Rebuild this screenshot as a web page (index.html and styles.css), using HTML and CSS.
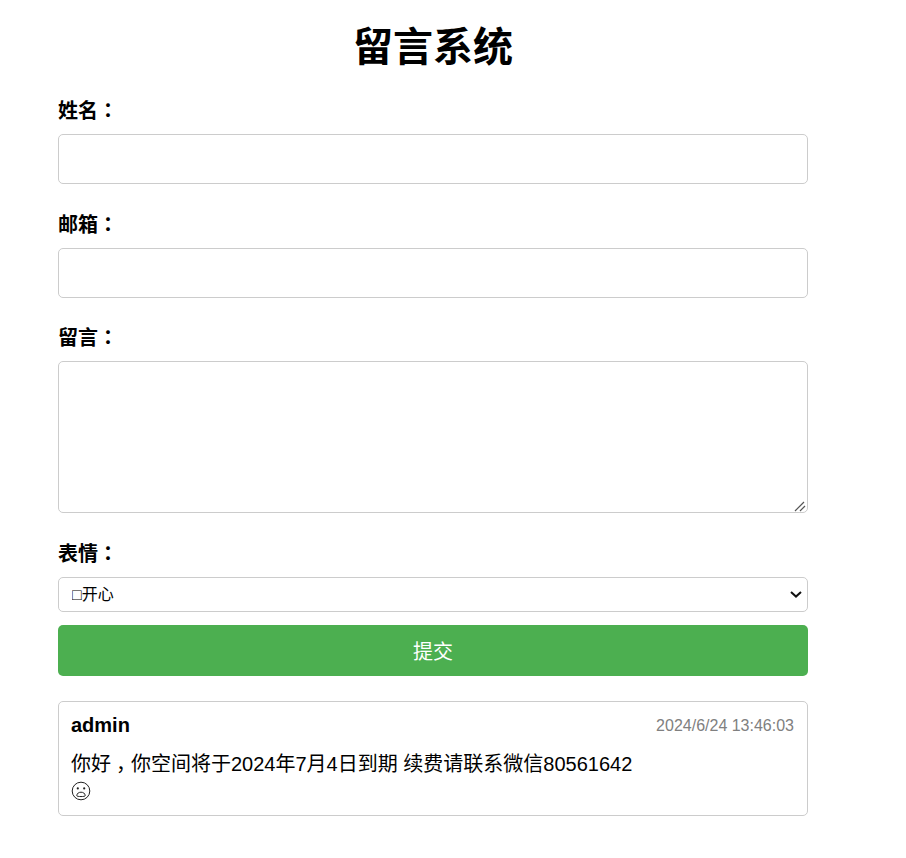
FILE: index.html
```html
<!DOCTYPE html>
<html lang="zh-CN">
<head>
  <meta charset="UTF-8">
  <meta name="viewport" content="width=device-width, initial-scale=1.0">
  <title>留言系统</title>
  <link rel="stylesheet" href="styles.css">
</head>
<body>
  <div class="container">
    <h1>留言系统</h1>

    <!-- Message Form -->
    <form class="message-form">
      <label for="name">姓名<span class="punct" lang="ko">：</span></label>
      <input type="text" id="name">

      <label for="email">邮箱<span class="punct" lang="ko">：</span></label>
      <input type="text" id="email">

      <label for="message">留言<span class="punct" lang="ko">：</span></label>
      <textarea id="message"></textarea>

      <label for="emotion">表情<span class="punct" lang="ko">：</span></label>
      <div class="select-wrap">
        <select id="emotion">
          <option>□开心</option>
        </select>
        <svg class="select-arrow" width="12" height="7" viewBox="0 0 12 7" fill="none" stroke="#111" stroke-width="2">
          <path d="M1 1 6 5.6 11 1"/>
        </svg>
      </div>

      <button type="button" class="submit-button">提交</button>
    </form>

    <!-- Message List -->
    <div class="message-card">
      <div class="message-header">
        <span class="message-author">admin</span>
        <span class="message-time">2024/6/24 13:46:03</span>
      </div>
      <div class="message-text">你好<span class="punct comma" lang="ko">，</span>你空间将于2024年7月4日到期 续费请联系微信80561642</div>
      <div class="message-emotion">
        <svg width="20" height="20" viewBox="0 0 20 20" fill="none" stroke="#222" stroke-width="1">
          <circle cx="10" cy="10" r="8.8"/>
          <circle cx="6.8" cy="7.4" r="1.1" fill="#222" stroke="none"/>
          <circle cx="13.2" cy="7.4" r="1.1" fill="#222" stroke="none"/>
          <path d="M5.8 14.8C5.8 12.2 8 11.2 10 11.2s4.2 1 4.2 3.6C14.2 15.8 5.8 15.8 5.8 14.8Z"/>
        </svg>
      </div>
    </div>
  </div>
</body>
</html>
```

FILE: styles.css
```css
/* General Styling */
body {
  font-family: "Liberation Sans", "Noto Sans CJK SC", sans-serif;
  margin: 0;
  padding: 0 98px 0 58px;
  color: #000;
  background: #fff;
}

.container {
  width: 750px;
}

/* Centred full-width punctuation */
.punct {
  font-family: "Noto Sans CJK KR", sans-serif;
  line-height: 1;
}

.comma {
  margin-left: 5px;
  letter-spacing: -5px;
}

/* Header */
h1 {
  font-size: 40px;
  line-height: 46px;
  margin: 24px 0 28px;
  text-align: center;
}

/* Form */
.message-form {
  display: flex;
  flex-direction: column;
}

label {
  font-size: 20px;
  font-weight: bold;
  line-height: 27px;
  margin-bottom: 9px;
}

input,
textarea,
select {
  box-sizing: border-box;
  width: 100%;
  border: 1px solid #ccc;
  border-radius: 5px;
  background: #fff;
  font-family: inherit;
}

input {
  height: 50px;
  margin-bottom: 27.5px;
}

textarea {
  height: 152px;
  margin-bottom: 28px;
  display: block;
}

textarea::-webkit-resizer {
  background: url("data:image/svg+xml,%3Csvg xmlns='http://www.w3.org/2000/svg' width='15' height='15'%3E%3Cpath d='M3 14 12 5M8 14 13 9' stroke='%23555' stroke-width='1.2' fill='none'/%3E%3C/svg%3E") no-repeat;
}

/* Select */
.select-wrap {
  position: relative;
  margin-bottom: 13px;
}

select {
  display: block;
  appearance: none;
  height: 35px;
  font-size: 16px;
  color: #000;
  padding: 0 13px;
}

.select-arrow {
  position: absolute;
  right: 6px;
  top: 14px;
  pointer-events: none;
}

/* Button */
.submit-button {
  height: 51px;
  background-color: #4CAF50;
  color: white;
  border: none;
  border-radius: 5px;
  font-family: inherit;
  font-size: 20px;
  cursor: pointer;
}

/* Message Card */
.message-card {
  box-sizing: border-box;
  height: 115px;
  margin-top: 25px;
  padding: 12px 13px 12px 12px;
  border: 1px solid #ccc;
  border-radius: 5px;
}

.message-header {
  display: flex;
  justify-content: space-between;
  align-items: center;
  line-height: 23px;
  margin-bottom: 14px;
}

.message-author {
  font-size: 20px;
  font-weight: bold;
}

.message-time {
  font-size: 16px;
  color: #808080;
}

.message-text {
  font-size: 20px;
  line-height: 27px;
}

.message-emotion {
  height: 25px;
  display: flex;
  align-items: center;
}
```
